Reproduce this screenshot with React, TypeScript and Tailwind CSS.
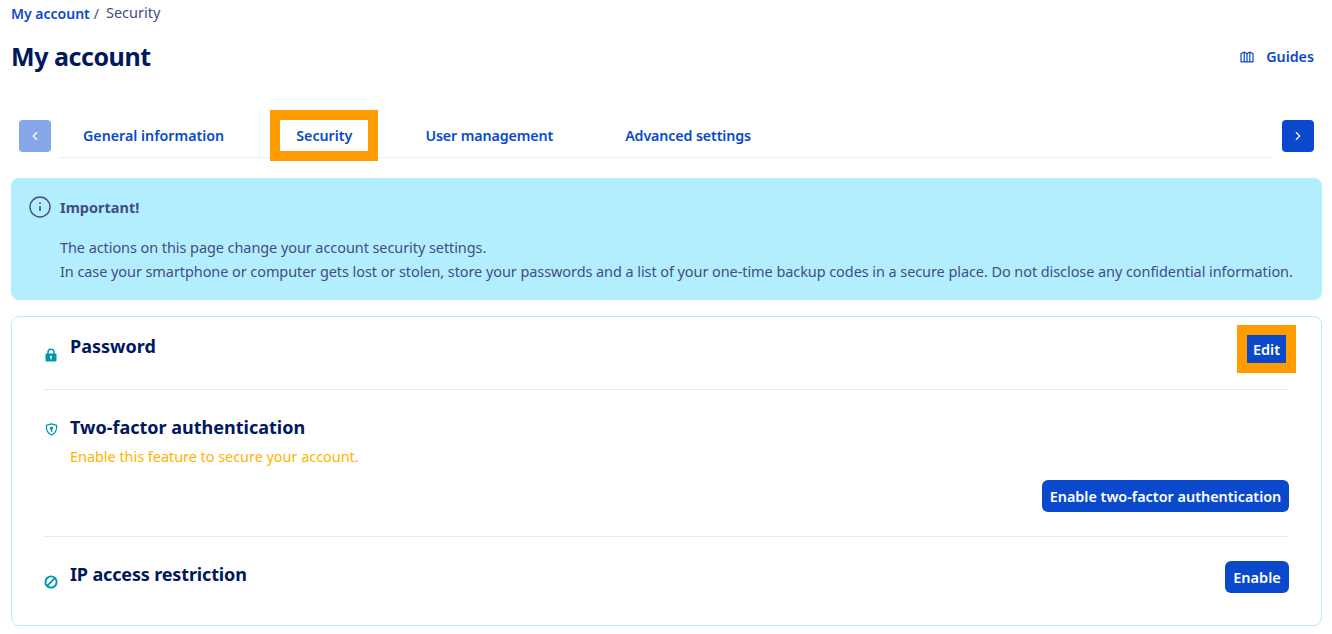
import React from 'react';
import { ChevronLeft, ChevronRight } from 'lucide-react';

const GuidesIcon = () => (
  <svg viewBox="0 0 14 12" className="w-[14px] h-[12px]" fill="none" stroke="#0a49cc" strokeWidth="1.2" strokeLinejoin="round">
    <path d="M1 2.8C2 2.2 3.2 1.4 4.2 1.2 5.4 1.4 6.2 2.2 7 2.8 7.8 2.2 8.6 1.4 9.8 1.2 10.8 1.4 12 2.2 13 2.8V10.8H1Z" />
    <path d="M4.2 1.2V10.8M7 2.8V10.8M9.8 1.2V10.8" />
  </svg>
);

const InfoIcon = () => (
  <svg viewBox="0 0 22 22" className="w-[22px] h-[22px]" fill="none" stroke="#444c85" strokeWidth="1.4">
    <circle cx="11" cy="11" r="10" />
    <path d="M11 10v5" strokeWidth="1.6" />
    <circle cx="11" cy="7.2" r="0.9" fill="#444c85" stroke="none" />
  </svg>
);

const LockIcon = () => (
  <svg viewBox="0 0 12 14" className="w-[12px] h-[14px]">
    <path d="M3 6V4.2a3 3 0 0 1 6 0V6" fill="none" stroke="#0097ae" strokeWidth="1.5" />
    <rect x="0.5" y="5.5" width="11" height="8" rx="1" fill="#0097ae" />
    <circle cx="6" cy="8.8" r="1.1" fill="#fff" />
    <rect x="5.5" y="9" width="1" height="2.4" fill="#fff" />
  </svg>
);

const ShieldIcon = () => (
  <svg viewBox="0 0 14 14" className="w-[13px] h-[13px]">
    <path d="M7 1 12.6 2.6C12.8 7.4 11 11 7 13 3 11 1.2 7.4 1.4 2.6Z" fill="none" stroke="#0097ae" strokeWidth="1.3" strokeLinejoin="round" />
    <circle cx="7" cy="5.6" r="1.7" fill="#0097ae" />
    <rect x="6.2" y="6" width="1.6" height="3.6" fill="#0097ae" />
  </svg>
);

const BanIcon = () => (
  <svg viewBox="0 0 14 14" className="w-[14px] h-[14px]" fill="none" stroke="#0097ae" strokeWidth="1.9">
    <circle cx="7" cy="7" r="5.6" />
    <path d="M3.2 10.8 10.8 3.2" />
  </svg>
);

const Tab = ({ label, active, tight }: { label: string; active?: boolean; tight?: boolean }) => (
  <div className={active ? 'h-[31px] pl-[16px] pr-[16px] ml-[8px] mr-[9px] flex items-center outline-[10px] outline-solid outline-[#ff9d00] bg-white' : 'h-[31px] px-[24px] flex items-center'}>
    <span className={tight ? 'text-[14.25px] tracking-[-0.12px] font-semibold text-[#0a49cc] whitespace-nowrap' : 'text-[14.25px] font-semibold text-[#0a49cc] whitespace-nowrap'}>{label}</span>
  </div>
);

export default function App() {
  return (
    <div className="min-h-[634px] bg-white pl-[11px] pr-[10px] overflow-hidden font-['Noto_Sans',sans-serif] text-[#444c85]">
      <div className="flex items-center h-[26px] text-[14px]">
        <span className="font-semibold text-[#0a49cc]">My account</span>
        <span className="ml-[4px] mr-[7px]">/</span>
        <span className="text-[14.5px]">Security</span>
      </div>

      <div className="flex items-center justify-between h-[36px] mt-[13px]">
        <h1 className="text-[25px] tracking-[-0.45px] font-bold text-[#00185e]">My account</h1>
        <div className="flex items-center gap-[12px] mr-[8px] text-[14.25px] font-semibold text-[#0a49cc]">
          <GuidesIcon />
          <span>Guides</span>
        </div>
      </div>

      <div className="flex items-center mt-[45px] px-[8px] h-[32px]">
        <button className="w-[32px] h-[32px] rounded-[4px] bg-[#85a6e8] flex items-center justify-center shrink-0">
          <ChevronLeft size={14} color="#fff" strokeWidth={2} />
        </button>
        <div className="flex-1 mx-[8px] h-[38px] mt-[6px] border-b border-[#e6eff8] flex items-start gap-[24px]">
          <Tab label="General information" />
          <Tab label="Security" active />
          <Tab label="User management" tight />
          <Tab label="Advanced settings" tight />
        </div>
        <button className="w-[32px] h-[32px] rounded-[4px] bg-[#0a49cc] flex items-center justify-center shrink-0">
          <ChevronRight size={14} color="#fff" strokeWidth={2} />
        </button>
      </div>

      <div className="mt-[26px] h-[122px] rounded-[8px] bg-[#b3eeff] pl-[18px] pt-[18px] flex gap-[9px]">
        <InfoIcon />
        <div className="text-[14.5px]">
          <div className="font-bold leading-[22px]">Important!</div>
          <div className="mt-[18px] leading-[23.5px] whitespace-nowrap tracking-[-0.08px]">
            The actions on this page change your account security settings.
            <br />
            In case your smartphone or computer gets lost or stolen, store your passwords and a list of your one-time backup codes in a secure place. Do not disclose any confidential information.
          </div>
        </div>
      </div>

      <div className="mt-[16px] h-[310px] rounded-[8px] border border-[#b3eeff] px-[32px]">
        <div className="h-[73px] border-b border-[#e8ebef] flex justify-between">
          <div className="flex">
            <div className="w-[26px] pt-[31px] pl-[1px]"><LockIcon /></div>
            <div className="pt-[16px] text-[18px] leading-[26px] font-bold text-[#00185e]">Password</div>
          </div>
          <button className="mt-[18px] mr-[3px] w-[39px] h-[28px] pt-[1px] bg-[#0a49cc] text-white text-[14.5px] font-semibold outline-[10px] outline-solid outline-[#ff9d00]">Edit</button>
        </div>

        <div className="h-[147px] border-b border-[#e8ebef]">
          <div className="flex">
            <div className="w-[26px] pt-[33px] pl-[1px]"><ShieldIcon /></div>
            <div className="pt-[24px]">
              <div className="text-[18px] leading-[26px] font-bold text-[#00185e]">Two-factor authentication</div>
              <div className="mt-[6px] text-[14.5px] leading-[20px] text-[#ffb300] tracking-[-0.05px]">Enable this feature to secure your account.</div>
            </div>
          </div>
          <div className="flex justify-end mt-[14px]">
            <button className="h-[32px] w-[247px] pt-[1px] rounded-[6px] bg-[#0a49cc] text-white text-[14.4px] font-semibold whitespace-nowrap">Enable two-factor authentication</button>
          </div>
        </div>

        <div className="flex justify-between">
          <div className="flex">
            <div className="w-[26px] pt-[38px]"><BanIcon /></div>
            <div className="pt-[24px] text-[18px] leading-[26px] tracking-[-0.15px] font-bold text-[#00185e]">IP access restriction</div>
          </div>
          <button className="mt-[24px] h-[32px] w-[64px] pt-[1px] rounded-[6px] bg-[#0a49cc] text-white text-[14.5px] font-semibold">Enable</button>
        </div>
      </div>
    </div>
  );
}
